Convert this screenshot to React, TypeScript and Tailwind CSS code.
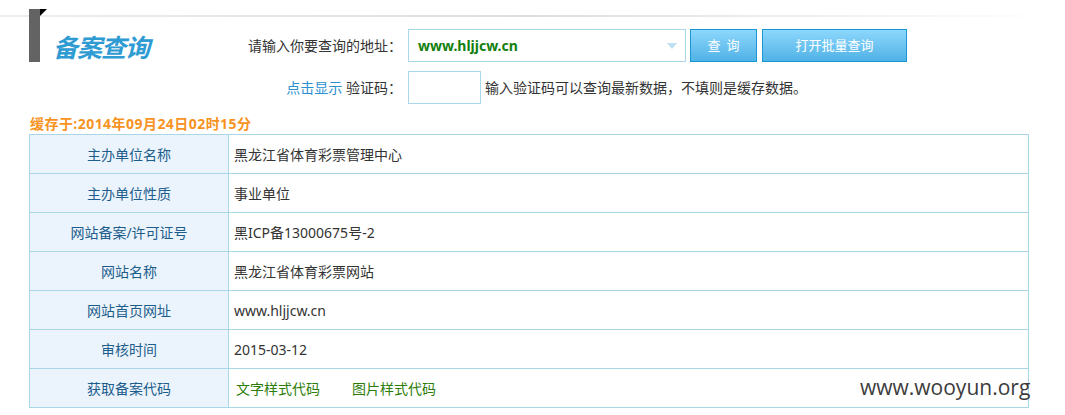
import React from "react";

const rows: { k: string; v: React.ReactNode }[] = [
  { k: "主办单位名称", v: "黑龙江省体育彩票管理中心" },
  { k: "主办单位性质", v: "事业单位" },
  { k: "网站备案/许可证号", v: "黑ICP备13000675号-2" },
  { k: "网站名称", v: "黑龙江省体育彩票网站" },
  { k: "网站首页网址", v: "www.hljjcw.cn" },
  { k: "审核时间", v: "2015-03-12" },
  {
    k: "获取备案代码",
    v: (
      <span className="flex text-[#2e7d0a]">
        <span className="pl-[2px]">文字样式代码</span>
        <span className="ml-[32px]">图片样式代码</span>
      </span>
    ),
  },
];

export default function App() {
  return (
    <div
      className="relative w-[1065px] h-[415px] bg-white overflow-hidden text-[14px] text-[#333]"
      style={{ fontFamily: '"Noto Sans", "Noto Sans CJK SC", sans-serif' }}
    >
      {/* decorative top line */}
      <div className="absolute left-0 top-[15px] w-[1060px] h-[2px] bg-gradient-to-r from-[#eeeeee] via-[#dedede] to-transparent" />

      <div className="relative flex pt-[9px]">
        {/* logo block */}
        <div className="flex w-[240px] shrink-0 pl-[29px]">
          <div className="w-[11px] h-[53px] bg-[#636363]" />
          <div className="w-0 h-0 border-t-[7px] border-t-black border-r-[7px] border-r-transparent" />
          <div
            className="ml-[6px] mt-[22px] text-[25px] leading-[30px] font-bold italic text-[#2f9bd3] tracking-[-1px]"
            style={{ fontFamily: '"Noto Sans CJK SC", sans-serif' }}
          >
            备案查询
          </div>
        </div>

        {/* form */}
        <div className="flex flex-col pt-[20px]">
          <div className="flex items-center h-[33px]">
            <div className="w-[168px] pr-[6px] text-right leading-[33px] whitespace-nowrap">请输入你要查询的地址：</div>
            <div className="relative flex items-center w-[278px] h-[33px] border border-[#a9d8ea] pl-[9px]">
              <span className="font-bold text-[14px] text-[#12800e]">www.hljjcw.cn</span>
              <div className="absolute left-[258px] top-[13px] w-0 h-0 border-l-[5px] border-l-transparent border-r-[5px] border-r-transparent border-t-[6px] border-t-[#bde0f2]" />
            </div>
            <button className="ml-[4px] w-[67px] h-[33px] border border-[#1996d4] bg-gradient-to-b from-[#8cd7fc] to-[#4fb2e6] text-white text-[13px] tracking-[6px] pl-[6px]">
              查询
            </button>
            <button className="ml-[5px] w-[145px] h-[33px] border border-[#1996d4] bg-gradient-to-b from-[#8cd7fc] to-[#4fb2e6] text-white text-[13px]">
              打开批量查询
            </button>
          </div>
          <div className="flex items-center h-[33px] mt-[9px]">
            <div className="w-[168px] pr-[6px] text-right leading-[33px] whitespace-nowrap">
              <span className="text-[#2b8fd0]">点击显示</span> 验证码：
            </div>
            <div className="w-[73px] h-[33px] border border-[#a9d8ea]" />
            <div className="ml-[4px] whitespace-nowrap">输入验证码可以查询最新数据，不填则是缓存数据。</div>
          </div>
        </div>
      </div>

      <div className="h-[30px] flex items-end pl-[30px] pb-[1px] font-bold text-[#f7931e] text-[14px] leading-[18px] tracking-[0.45px]">
        缓存于:2014年09月24日02时15分
      </div>

      <div className="ml-[29px] w-[1000px] border-l border-t border-[#a9d6e6]">
        {rows.map((r) => (
          <div key={r.k} className="flex h-[39px]">
            <div className="w-[199px] shrink-0 flex items-center justify-center bg-[#ebf4fc] text-[#1d5d8c] border-r border-b border-[#a9d6e6]">
              {r.k}
            </div>
            <div className="flex-1 flex items-center pl-[5px] border-r border-b border-[#a9d6e6]">
              {r.v}
            </div>
          </div>
        ))}
      </div>

      <div
        className="absolute left-[860px] top-[372px] text-[21px] leading-[30px] text-[#3c3c3c]"
        style={{ fontFamily: '"Open Sans", sans-serif' }}
      >
        www.wooyun.org
      </div>
    </div>
  );
}
